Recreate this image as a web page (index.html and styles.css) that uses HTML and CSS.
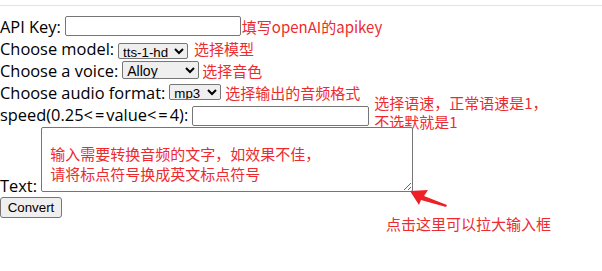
FILE: index.html
```html
<!DOCTYPE html>
<html lang="zh-CN">
<head>
    <meta charset="UTF-8">
    <meta name="viewport" content="width=device-width, initial-scale=1.0">
    <title>TTS</title>
    <link rel="stylesheet" href="styles.css">
</head>
<body>
    <div class="topbar"></div>

    <form class="tts-form">
        <div class="row">
            <label for="apikey">API Key:</label>
            <input type="text" id="apikey" class="key-input">
            <span class="note note-key">填写openAI的apikey</span>
        </div>
        <div class="row">
            <label for="model">Choose model:</label>
            <select id="model" class="sel-model">
                <option>tts-1-hd</option>
                <option>tts-1</option>
            </select>
            <span class="note note-model">选择模型</span>
        </div>
        <div class="row">
            <label for="voice">Choose a voice:</label>
            <select id="voice" class="sel-voice">
                <option>Alloy</option>
                <option>Echo</option>
                <option>Fable</option>
                <option>Onyx</option>
                <option>Nova</option>
                <option>Shimmer</option>
            </select>
            <span class="note">选择音色</span>
        </div>
        <div class="row">
            <label for="format">Choose audio format:</label>
            <select id="format" class="sel-format">
                <option>mp3</option>
                <option>opus</option>
                <option>aac</option>
                <option>flac</option>
            </select>
            <span class="note note-format">选择输出的音频格式</span>
        </div>
        <div class="row">
            <label for="speed">speed(0.25<span class="op">&lt;=</span>value<span class="op">&lt;=</span>4):</label>
            <input type="text" id="speed" class="speed-input">
            <span class="note note-speed">选择语速，正常语速是1，<br>不选默就是1</span>
        </div>

        <div class="text-row">
            <label for="text">Text:</label>
            <textarea id="text" class="text-box">输入需要转换音频的文字，如效果不佳，
请将标点符号换成英文标点符号</textarea>

            <!-- anotación: el tirador para agrandar -->
            <svg class="arrow" width="45" height="24" viewBox="0 0 45 24">
                <polygon points="1,6 19,5 15,11 38,20 37,22 12,15 10,20" fill="#ee2027"/>
            </svg>
            <span class="note note-resize">点击这里可以拉大输入框</span>
        </div>

        <button type="button" class="convert-btn">Convert</button>
    </form>
</body>
</html>
```

FILE: styles.css
```css
html, body {
    min-height: 100vh;
}

body {
    margin: 0;
    font-family: 'Open Sans', 'Noto Sans CJK SC', sans-serif;
    font-size: 16.4px;
    color: #000;
    background: #fff;
}

.topbar {
    height: 5px;
    border-bottom: 1px solid #e3e3e3;
}

.tts-form {
    margin-top: 9px;
}

.row {
    display: flex;
    align-items: center;
    height: 22px;
    white-space: nowrap;
}

.row label {
    margin-right: 4px;
}

.op {
    letter-spacing: 2px;
}

.note {
    color: #ee2a2f;
    font-family: 'Noto Sans CJK SC', sans-serif;
    font-size: 15px;
    margin-left: 3px;
}

.note-key {
    margin-left: 1px;
}

.note-model {
    margin-left: 6px;
}

.note-format {
    margin-left: 4px;
}

.note-speed {
    margin-left: 5px;
    line-height: 19px;
    margin-top: -12px;
    margin-bottom: -8px;
}

input[type="text"] {
    box-sizing: border-box;
    height: 20px;
    border: 1px solid #767676;
    border-radius: 2px;
    padding: 1px 2px;
    margin: 0;
}

.key-input {
    width: 176px;
}

.speed-input {
    width: 177px;
    margin-top: 4px !important;
}

select {
    box-sizing: border-box;
    height: 16px;
    padding: 0;
    font-family: 'Liberation Sans', Arial, sans-serif;
    font-size: 13.3px;
    border: 1px solid #767676;
    border-radius: 2px;
    margin: 0;
}

.sel-model {
    width: 70px;
    margin-top: 5px;
}

.sel-voice {
    width: 77px;
    height: 18px;
    font-size: 14px;
}

.sel-format {
    width: 52px;
}

.text-row {
    position: relative;
}

.text-box {
    box-sizing: border-box;
    width: 372px;
    height: 65px;
    margin: 2px 0 0 0;
    padding: 16px 8px 0;
    border: 1px solid #767676;
    border-radius: 2px;
    color: #ee2a2f;
    font-family: 'Noto Sans CJK SC', sans-serif;
    font-size: 15px;
    line-height: 20px;
    overflow: hidden;
}

.arrow {
    position: absolute;
    left: 409px;
    top: 60px;
}

.note-resize {
    position: absolute;
    left: 386px;
    top: 88px;
    margin: 0;
    white-space: nowrap;
}

.convert-btn {
    display: block;
    margin-top: 0;
    width: 62px;
    height: 21px;
    padding: 1px 6px;
    font-family: 'Liberation Sans', Arial, sans-serif;
    font-size: 13.3px;
    color: #000;
    background: #efefef;
    border: 1px solid #767676;
    border-radius: 3px;
}
```
